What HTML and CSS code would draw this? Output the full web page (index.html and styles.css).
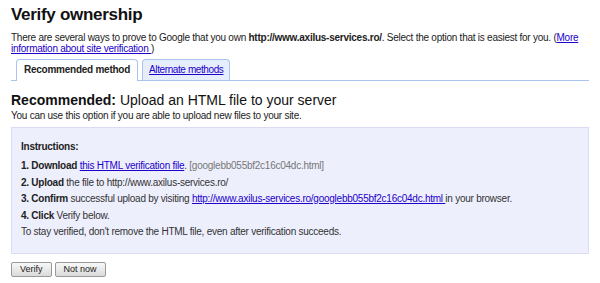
FILE: index.html
```html
<!DOCTYPE html>
<html lang="en">
  <head>
    <meta charset="UTF-8" />
    <title>Verify ownership</title>
    <link rel="stylesheet" href="styles.css">
  </head>
  <body>
    <h1>Verify ownership</h1>
    <p class="intro">
      There are several ways to prove to Google that you own <b>http://www.axilus-services.ro/</b>. Select the option that is easiest for you. (<a href="#">More information about site verification </a>)
    </p>

    <div class="tabs">
      <span class="tab active">Recommended method</span>
      <span class="tab"><a href="#">Alternate methods</a></span>
    </div>

    <h2><b>Recommended:</b> Upload an HTML file to your server</h2>
    <p class="sub">You can use this option if you are able to upload new files to your site.</p>

    <div class="instructions">
      <div class="title">Instructions:</div>
      <ol>
        <li><b>1. Download</b> <a href="#">this HTML verification file</a>. <span class="file">[googlebb055bf2c16c04dc.html]</span></li>
        <li><b>2. Upload</b> the file to http://www.axilus-services.ro/</li>
        <li><b>3. Confirm</b> successful upload by visiting <a href="#">http://www.axilus-services.ro/googlebb055bf2c16c04dc.html </a>in your browser.</li>
        <li><b>4. Click</b> Verify below.</li>
        <li>To stay verified, don't remove the HTML file, even after verification succeeds.</li>
      </ol>
    </div>

    <div class="buttons">
      <button>Verify</button>
      <button>Not now</button>
    </div>
  </body>
</html>
```

FILE: styles.css
```css
body {
  margin: 0;
  padding: 5px 11px 0;
  font-family: "Liberation Sans", Arial, sans-serif;
  font-size: 10px;
  letter-spacing: -0.25px;
  color: #222;
  background: #fff;
}

a {
  color: #2200cc;
}

h1 {
  margin: 0;
  font-size: 17px;
  line-height: 20px;
  letter-spacing: -0.3px;
  color: #111;
}

.intro {
  margin: 7px 0 0;
  line-height: 11px;
}

.tabs {
  display: flex;
  align-items: flex-end;
  gap: 4px;
  margin-top: 5px;
  padding-left: 5px;
  border-bottom: 1px solid #a9c4ee;
}

.tab {
  padding: 4px 6px;
  line-height: 12px;
  border: 1px solid #a9c4ee;
  border-bottom: none;
  border-radius: 4px 4px 0 0;
  background: #e6eefc;
}

.tab a {
  letter-spacing: -0.4px;
}

.tab.active {
  font-weight: bold;
  background: #fff;
  margin-bottom: -1px;
  padding: 4px 7px 5px;
  color: #222;
}

h2 {
  margin: 11px 0 0;
  font-size: 14px;
  font-weight: normal;
  line-height: 17px;
  letter-spacing: 0;
  color: #111;
}

.sub {
  margin: 1px 0 0;
  line-height: 12px;
}

.instructions {
  margin-top: 5px;
  width: 578px;
  box-sizing: border-box;
  padding: 13px 9px 12px;
  background: #eeeffd;
  border: 1px solid #dadcf4;
  color: #333;
}

.title {
  font-weight: bold;
  color: #222;
  line-height: 12px;
  margin-bottom: 5px;
}

ol {
  list-style: none;
  margin: 0;
  padding: 0;
}

ol li {
  line-height: 16.5px;
}

ol b {
  color: #222;
}

.file {
  color: #777;
}

.buttons {
  display: flex;
  gap: 3px;
  margin-top: 8px;
}

button {
  font-family: "Liberation Sans", Arial, sans-serif;
  font-size: 9px;
  color: #222;
  padding: 0 8px;
  height: 15px;
  line-height: 13px;
  border: 1px solid #999;
  border-radius: 2px;
  background: linear-gradient(#f8f8f8, #dadada);
}
```
